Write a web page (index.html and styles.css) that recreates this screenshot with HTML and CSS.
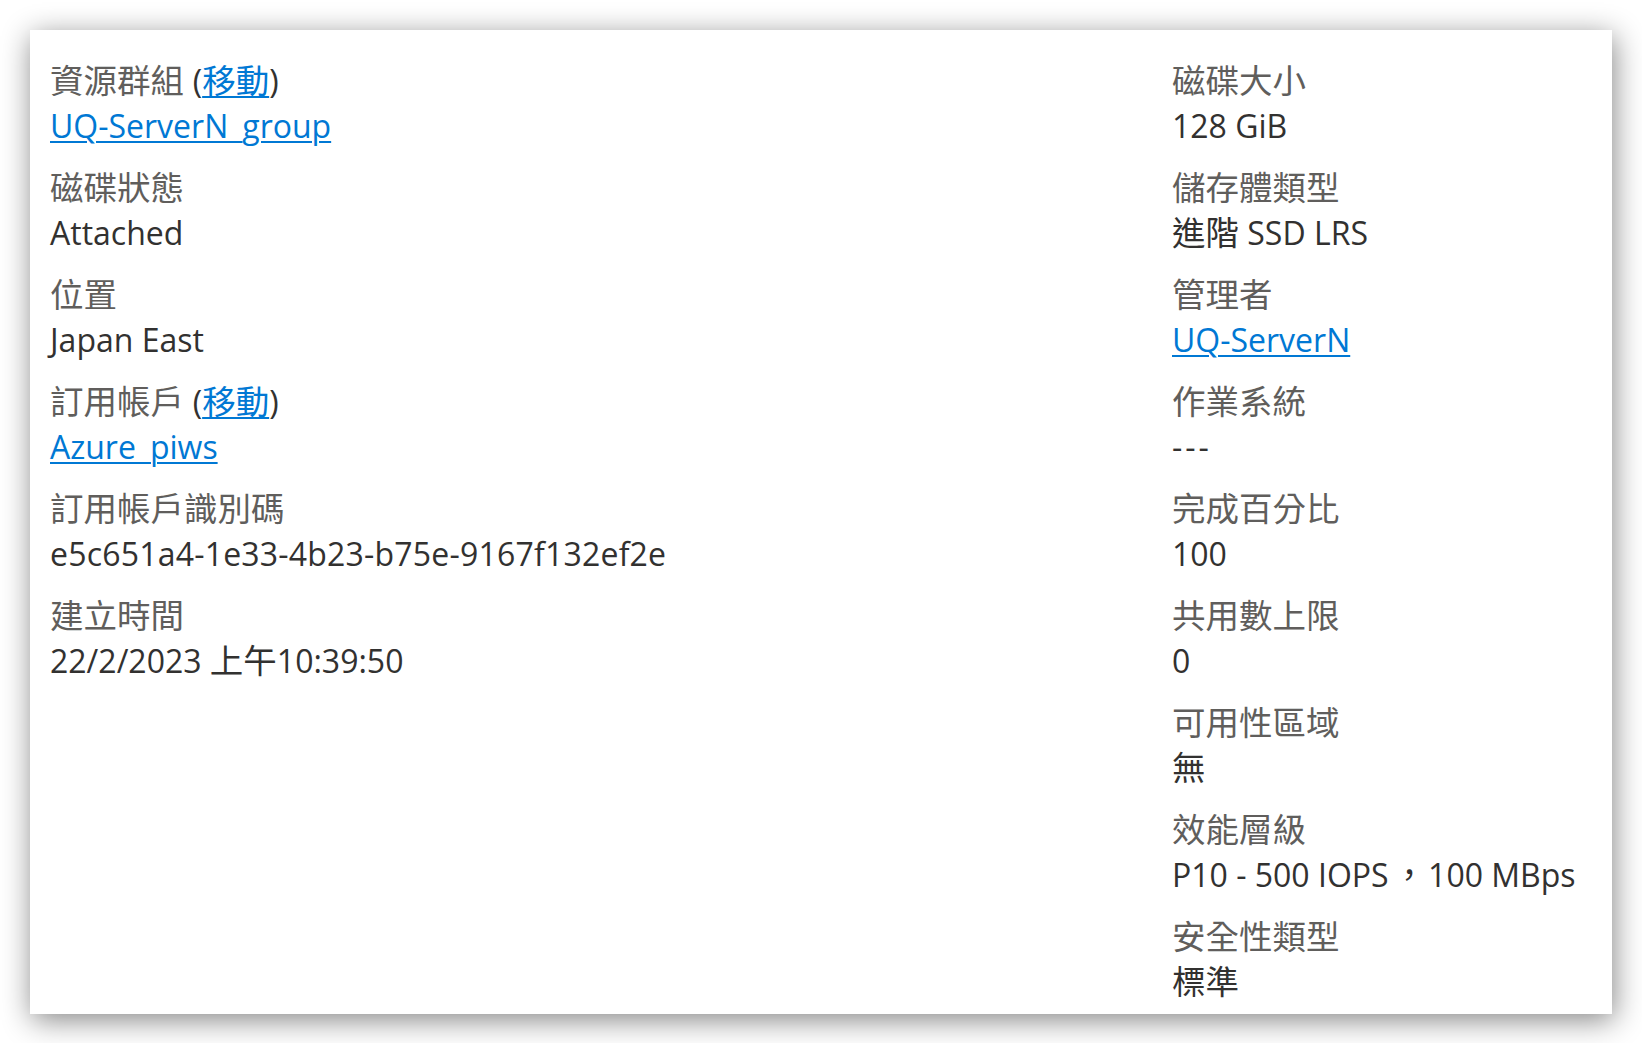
FILE: index.html
```html
<!DOCTYPE html>
<html lang="zh-Hant">
<head>
<meta charset="utf-8">
<title>磁碟概觀</title>
<link rel="stylesheet" href="styles.css">
</head>
<body>
<div class="card">
  <div class="col">
    <div class="item">
      <div class="label">資源群組 <span class="paren">(</span><a class="link" href="#">移動</a><span class="paren">)</span></div>
      <div class="value"><a class="link" href="#">UQ-ServerN_group</a></div>
    </div>
    <div class="item">
      <div class="label">磁碟狀態</div>
      <div class="value">Attached</div>
    </div>
    <div class="item">
      <div class="label">位置</div>
      <div class="value">Japan East</div>
    </div>
    <div class="item">
      <div class="label">訂用帳戶 <span class="paren">(</span><a class="link" href="#">移動</a><span class="paren">)</span></div>
      <div class="value"><a class="link" href="#">Azure_piws</a></div>
    </div>
    <div class="item">
      <div class="label">訂用帳戶識別碼</div>
      <div class="value guid">e5c651a4-1e33-4b23-b75e-9167f132ef2e</div>
    </div>
    <div class="item">
      <div class="label">建立時間</div>
      <div class="value">22/2/2023 <span class="cjk">上午</span>10:39:50</div>
    </div>
  </div>
  <div class="col">
    <div class="item">
      <div class="label">磁碟大小</div>
      <div class="value">128 GiB</div>
    </div>
    <div class="item">
      <div class="label">儲存體類型</div>
      <div class="value"><span class="cjk">進階</span> SSD LRS</div>
    </div>
    <div class="item">
      <div class="label">管理者</div>
      <div class="value"><a class="link" href="#">UQ-ServerN</a></div>
    </div>
    <div class="item">
      <div class="label">作業系統</div>
      <div class="value"><span class="dashes">---</span></div>
    </div>
    <div class="item">
      <div class="label">完成百分比</div>
      <div class="value">100</div>
    </div>
    <div class="item">
      <div class="label">共用數上限</div>
      <div class="value">0</div>
    </div>
    <div class="item">
      <div class="label">可用性區域</div>
      <div class="value"><span class="cjk">無</span></div>
    </div>
    <div class="item">
      <div class="label">效能層級</div>
      <div class="value">P10 - 500 IOPS<span class="cjk comma">，</span>100 MBps</div>
    </div>
    <div class="item">
      <div class="label">安全性類型</div>
      <div class="value"><span class="cjk">標準</span></div>
    </div>
  </div>
</div>
</body>
</html>
```
FILE: styles.css
```css
html, body {
  margin: 0;
  padding: 0;
  background: #ffffff;
}

body {
  font-family: "Open Sans", "Noto Sans CJK TC", sans-serif;
  font-size: 32px;
  color: #323130;
  min-height: 1043px;
}

.card {
  margin: 30px 0 30px 30px;
  width: 1582px;
  box-sizing: border-box;
  background: #ffffff;
  box-shadow: 2px 6px 28px rgba(0, 0, 0, 0.48);
  padding: 28px 0 10px 20px;
  display: grid;
  grid-template-columns: 1122px 1fr;
}

.col {
  display: flex;
  flex-direction: column;
  gap: 17px;
}

.item {
  display: flex;
  flex-direction: column;
}

.label,
.value {
  line-height: 45px;
  height: 45px;
  white-space: nowrap;
}

.label {
  color: #605e5c;
  font-size: 33.5px;
}

.value {
  color: #323130;
}

.guid {
  letter-spacing: 0.2px;
}

.cjk {
  font-size: 33.5px;
}

.comma {
  margin: 0 2px 0 4px;
}

.dashes {
  letter-spacing: 3px;
}

.paren {
  color: #323130;
  font-size: 32px;
}

.link {
  color: #0078d4;
  text-decoration: underline;
  text-decoration-thickness: 2px;
  text-underline-offset: 3px;
}
```
